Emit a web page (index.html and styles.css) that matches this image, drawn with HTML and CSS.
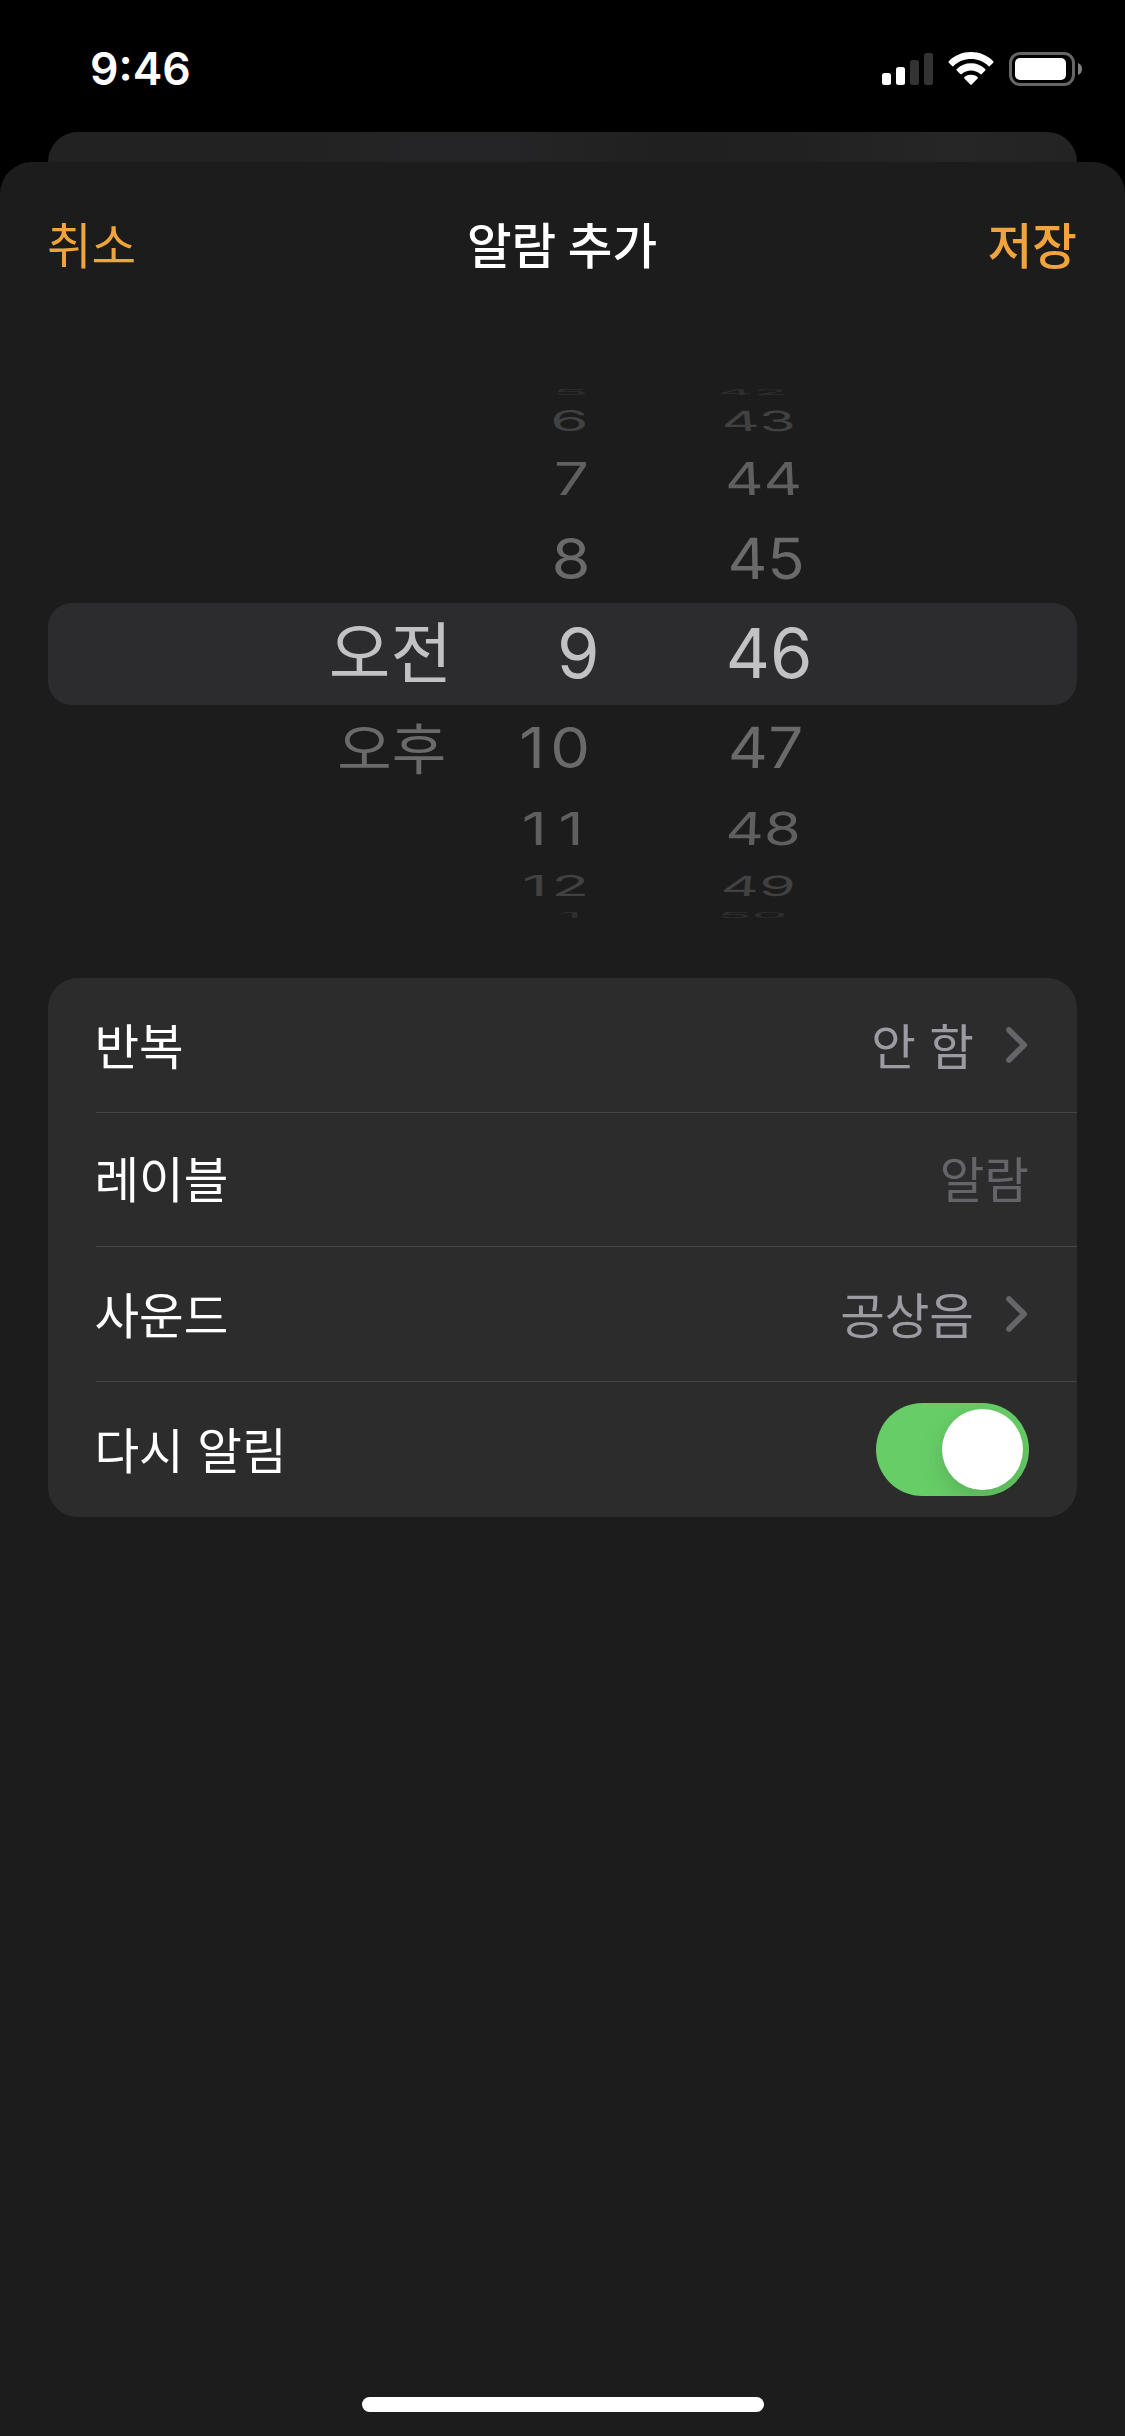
FILE: index.html
```
<!DOCTYPE html>
<html lang="ko">
<head>
<meta charset="utf-8">
<title>알람 추가</title>
<link rel="stylesheet" href="styles.css">
</head>
<body>
<div class="screen">
  <header class="status">
    <span class="time">9:46</span>
    <span class="status-icons">
      <svg class="signal" width="52" height="34" viewBox="0 0 52 34">
        <rect x="0" y="21" width="9" height="12" rx="2.5" fill="#fff"/>
        <rect x="14" y="15" width="9" height="18" rx="2.5" fill="#fff"/>
        <rect x="28" y="8" width="9" height="25" rx="2.5" fill="#333"/>
        <rect x="42" y="1" width="9" height="32" rx="2.5" fill="#333"/>
      </svg>
      <svg class="wifi" width="46" height="34" viewBox="0 0 46 34" fill="#fff">
        <path d="M23 0C31.5 0 39.500 3.300 45.200 9.200Q46 10 45.200 10.800L41.900 14.100Q41.200 14.800 40.400 14C35.700 9.600 29.700 7.100 23 7.100S10.300 9.600 5.600 14Q4.800 14.800 4.100 14.100L.8 10.800Q0 10 .8 9.200C6.500 3.300 14.500 0 23 0Z"/>
        <path d="M23 11.300C28.400 11.300 33.400 13.300 37.200 16.900Q38 17.700 37.200 18.500L33.800 21.900Q33.100 22.600 32.300 21.900C29.700 19.600 26.500 18.400 23 18.400S16.300 19.600 13.700 21.900Q12.900 22.600 12.200 21.900L8.800 18.500Q8 17.700 8.800 16.900C12.600 13.300 17.600 11.300 23 11.300Z"/>
        <path d="M23 22.700C25.500 22.700 27.700 23.500 29.500 25Q30.300 25.700 29.600 26.400L23.700 32.500Q23 33.200 22.300 32.500L16.400 26.400Q15.700 25.700 16.500 25C18.300 23.500 20.500 22.700 23 22.700Z"/>
      </svg>
      <svg class="battery" width="74" height="34" viewBox="0 0 74 34">
        <rect x="1.500" y="1.500" width="63" height="31" rx="9.500" fill="none" stroke="#666" stroke-width="3"/>
        <rect x="6" y="6" width="51" height="22" rx="5" fill="#fff"/>
        <path d="M69 11Q73 12.500 73 17T69 23Z" fill="#808080"/>
      </svg>
    </span>
  </header>

  <div class="back-card"></div>

  <main class="sheet">
    <nav class="nav">
      <button class="action">취소</button>
      <h1 class="title">알람 추가</h1>
      <button class="action save">저장</button>
    </nav>

    <section class="picker">
      <div class="column meridiem">
        <span class="cell r4"></span>
        <span class="cell r3"></span>
        <span class="cell r2"></span>
        <span class="cell r1"></span>
        <span class="cell r0"><b>오전</b></span>
        <span class="cell r1"><b>오후</b></span>
      </div>
      <div class="column hours">
        <span class="cell r4"><b>5</b></span>
        <span class="cell r3"><b>6</b></span>
        <span class="cell r2"><b>7</b></span>
        <span class="cell r1"><b>8</b></span>
        <span class="cell r0"><b>9</b></span>
        <span class="cell r1 ten"><b>10</b></span>
        <span class="cell r2 eleven"><b>11</b></span>
        <span class="cell r3 twelve"><b>12</b></span>
        <span class="cell r4 one"><b>1</b></span>
      </div>
      <div class="column minutes">
        <span class="cell r4 above"><b>42</b></span>
        <span class="cell r3 above"><b>43</b></span>
        <span class="cell r2 above"><b>44</b></span>
        <span class="cell r1 above"><b>45</b></span>
        <span class="cell r0"><b>46</b></span>
        <span class="cell r1"><b>47</b></span>
        <span class="cell r2"><b>48</b></span>
        <span class="cell r3"><b>49</b></span>
        <span class="cell r4"><b>50</b></span>
      </div>
    </section>

    <section class="options">
      <div class="row">
        <span class="name">반복</span>
        <span class="value">안 함</span>
        <svg class="chevron" width="23" height="38" viewBox="0 0 23 38"><path d="M3 4 18.200 19 3 34"/></svg>
      </div>
      <div class="row label">
        <span class="name">레이블</span>
        <span class="value placeholder">알람</span>
      </div>
      <div class="row">
        <span class="name">사운드</span>
        <span class="value">공상음</span>
        <svg class="chevron" width="23" height="38" viewBox="0 0 23 38"><path d="M3 4 18.200 19 3 34"/></svg>
      </div>
      <div class="row">
        <span class="name">다시 알림</span>
        <span class="switch"><i class="knob"></i></span>
      </div>
    </section>

    <div class="home"></div>
  </main>
</div>
</body>
</html>
```
FILE: styles.css
```
* { box-sizing: border-box; }

body {
  margin: 0;
  background: #000;
  color: #fff;
  font-family: "Noto Sans CJK KR", sans-serif;
  font-size: 48.5px;
}

.screen {
  display: flex;
  flex-direction: column;
  width: 1125px;
  height: 2436px;
  overflow: hidden;
}

/* Status bar */
.status {
  display: flex;
  justify-content: space-between;
  height: 132px;
  padding: 52px 42px 0 90px;
}

.time {
  font: 600 44.5px/34px Inter, sans-serif;
}

.status-icons { display: flex; }
.wifi { margin-left: 14px; }
.battery { margin-left: 15px; }

/* Card of the screen underneath */
.back-card {
  height: 30px;
  margin: 0 48px;
  border-radius: 30px 30px 0 0;
  background: linear-gradient(90deg, #222 0, #222 25%, #252527 36%, #252527 44%, #202020 60%, #212121 72%, #262627 88%, #232323 100%);
}

.sheet {
  display: flex;
  flex: 1;
  flex-direction: column;
  border-radius: 32px 32px 0 0;
  background: #1c1c1c;
}

/* Navigation */
.nav {
  display: grid;
  grid-template-columns: 1fr auto 1fr;
  align-items: center;
  height: 161px;
  padding: 0 48px 0 47px;
}

.title {
  margin: 0;
  font-size: 48.5px;
  font-weight: 500;
  word-spacing: -2px;
}

.action {
  justify-self: start;
  padding: 0;
  border: 0;
  background: none;
  color: #f1a33c;
  font: inherit;
}

.save {
  justify-self: end;
  font-weight: 500;
}

/* Time wheel */
.picker {
  position: relative;
  z-index: 0;
  display: flex;
  height: 538.4px;
  margin: 61.8px 48px 0;
  font: 400 68.5px Inter, sans-serif;
}

/* Selection band behind the columns */
.picker::before {
  content: "";
  position: absolute;
  z-index: -1;
  inset: 218.2px 0 auto;
  height: 102px;
  border-radius: 24px;
  background: #2c2c2e;
}

.column {
  display: flex;
  flex-direction: column;
}

.meridiem {
  width: 123px;
  margin-left: 281px;
  font-family: "Noto Sans CJK KR", sans-serif;
  font-size: 67px;
}

.hours {
  width: 100px;
  margin-left: 47.5px;
}

.minutes {
  width: 100px;
  margin-left: 119.5px;
}

.cell {
  display: flex;
  flex-shrink: 0;
  align-items: center;
  justify-content: center;
  height: var(--h);
  color: var(--c);
}

.cell b {
  font-weight: 400;
  line-height: 1;
  white-space: nowrap;
  transform: translateX(var(--dx, 0)) skewX(var(--skew, 0deg)) scale(var(--sx, 1), var(--sy, 1));
}

.r0 { --h: 102px; --c: #c2c2c4; }
.r1 { --h: 87px; --c: #6a6a6b; --sx: .9; --sy: .83; }
.r2 { --h: 74px; --c: #5f5f60; --sx: .87; --sy: .663; }
.r3 { --h: 41.4px; --c: #414142; --sx: .86; --sy: .405; }
.r4 { --h: 15.8px; --c: #2e2e2f; --sx: .83; --sy: .12; }

.meridiem b { transform: translateY(-5.5px); }
.meridiem .r1 b { transform: translate(1px, -4px) scale(.883, .814); }

.hours .cell { justify-content: flex-end; }
.hours b { transform-origin: 100% 50%; }
.hours .r1 { --dx: -9px; --sx: .92; }
.hours .r2 { --dx: -11px; --sx: .9; }
.hours .r3 { --dx: -11px; --sx: .9; }
.hours .r4 { --dx: -11px; --sx: .88; }
.hours .ten { --dx: -3.5px; letter-spacing: 6px; }
.hours .eleven { --dx: -4.5px; letter-spacing: 13px; }
.hours .twelve { --dx: -6.5px; letter-spacing: 4.5px; }
.hours .one { --dx: -17px; }

.minutes .r1 { --dx: -3px; --skew: -1deg; }
.minutes .r2 { --dx: -6px; --skew: -2.5deg; }
.minutes .r3 { --dx: -11px; --skew: -5deg; }
.minutes .r4 { --dx: -17px; --skew: -14deg; }
.minutes .r1.above { --skew: 1deg; }
.minutes .r2.above { --skew: 2.5deg; }
.minutes .r3.above { --skew: 5deg; }
.minutes .r4.above { --skew: 14deg; }

/* Options list */
.options {
  height: 539px;
  margin: 54.8px 48px 0;
  border-radius: 30px;
  background: #2c2c2c;
}

.row {
  display: flex;
  align-items: center;
  height: 134.67px;
  margin-left: 47.5px;
  padding-right: 48px;
  border-bottom: 1px solid #444;
}

.row:last-child { border-bottom: 0; }

.name, .value {
  position: relative;
  top: -1px;
  line-height: 1;
}

.name { margin-left: -1px; }

.label .name, .label .value { top: -2px; }

.value {
  margin-left: auto;
  color: #9c9ba3;
}

.placeholder { color: #656468; }

.chevron {
  margin-left: 32px;
  fill: none;
  stroke: #656468;
  stroke-width: 5.7;
  stroke-linecap: round;
  stroke-linejoin: round;
}

.switch {
  display: flex;
  justify-content: flex-end;
  align-items: center;
  width: 153px;
  height: 93px;
  margin-left: auto;
  padding: 0 6px;
  border-radius: 47px;
  background: #67ce67;
  overflow: hidden;
}

.knob {
  width: 81px;
  height: 81px;
  border-radius: 50%;
  background: #fff;
  box-shadow: 0 9px 24px rgba(0, 0, 0, .15);
}

.home {
  width: 402px;
  height: 15px;
  margin: auto auto 24px;
  border-radius: 8px;
  background: #fff;
}
```
